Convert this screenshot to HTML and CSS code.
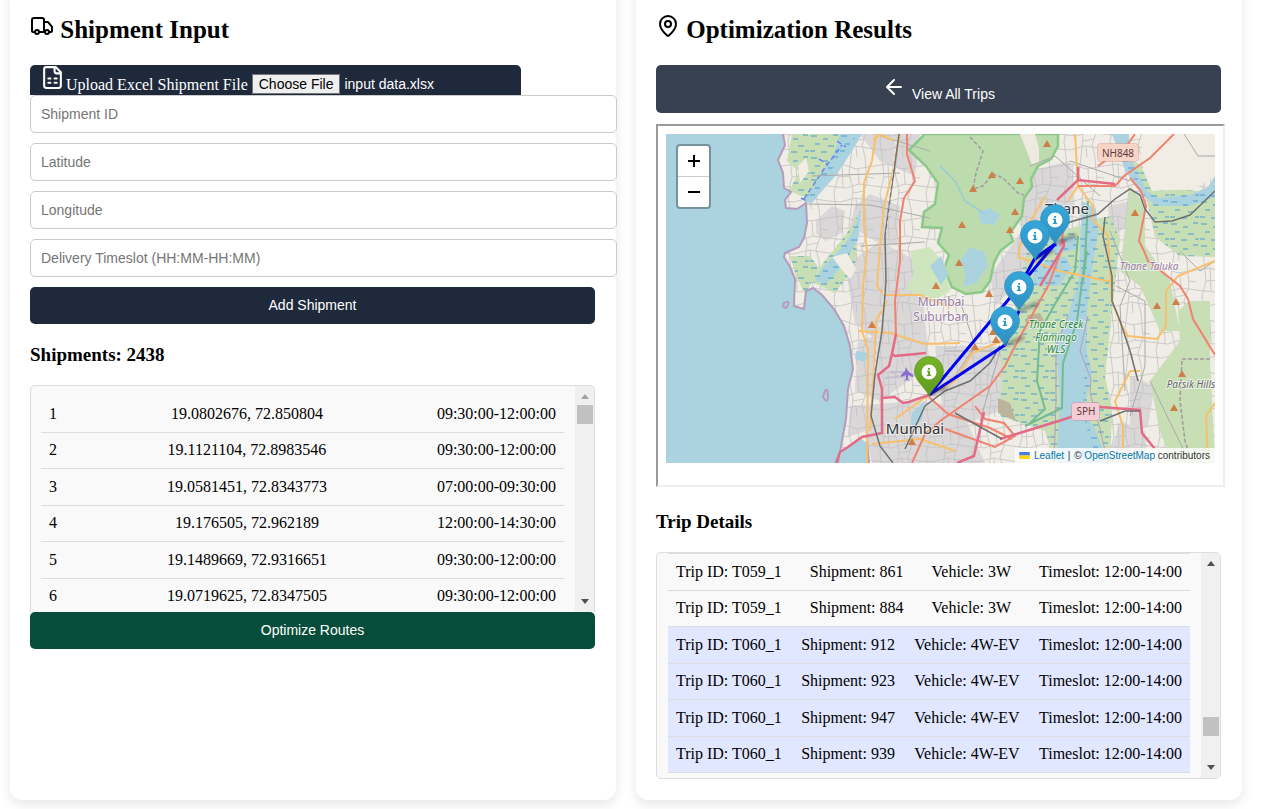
FILE: index.html
```html
<!DOCTYPE html>
<html lang="en">
<head>
<meta charset="utf-8">
<title>Shipment Optimizer</title>
<link rel="stylesheet" href="styles.css">
</head>
<body>
<main class="layout">
  <section class="card">
    <h2><svg class="icon" viewBox="0 0 24 24"><path d="M14 18V6a2 2 0 0 0-2-2H4a2 2 0 0 0-2 2v11a1 1 0 0 0 1 1h2M15 18H9M19 18h2a1 1 0 0 0 1-1v-3.65a1 1 0 0 0-.22-.624l-3.48-4.35A1 1 0 0 0 17.52 8H14"/><circle cx="17" cy="18" r="2"/><circle cx="7" cy="18" r="2"/></svg> Shipment Input</h2>
    <label class="upload" for="file"><svg class="icon" viewBox="0 0 24 24"><path d="M15 2H6a2 2 0 0 0-2 2v16a2 2 0 0 0 2 2h12a2 2 0 0 0 2-2V7ZM14 2v4a2 2 0 0 0 2 2h4M8 13h2M14 13h2M8 17h2M14 17h2"/></svg><span>Upload Excel Shipment File</span><input type="file" id="file"></label>
    <form class="fields">
      <input type="text" aria-label="Shipment ID" placeholder="Shipment ID">
      <input type="text" aria-label="Latitude" placeholder="Latitude">
      <input type="text" aria-label="Longitude" placeholder="Longitude">
      <input type="text" aria-label="Delivery Timeslot" placeholder="Delivery Timeslot (HH:MM-HH:MM)">
      <button type="button" class="btn navy">Add Shipment</button>
    </form>
    <h3>Shipments: 2438</h3>
    <div class="list shipments">
      <ul class="rows">
        <li><span>1</span><span>19.0802676, 72.850804</span><span>09:30:00-12:00:00</span></li>
        <li><span>2</span><span>19.1121104, 72.8983546</span><span>09:30:00-12:00:00</span></li>
        <li><span>3</span><span>19.0581451, 72.8343773</span><span>07:00:00-09:30:00</span></li>
        <li><span>4</span><span>19.176505, 72.962189</span><span>12:00:00-14:30:00</span></li>
        <li><span>5</span><span>19.1489669, 72.9316651</span><span>09:30:00-12:00:00</span></li>
        <li><span>6</span><span>19.0719625, 72.8347505</span><span>09:30:00-12:00:00</span></li>
      </ul>
      <div class="scrollbar at-top"><i class="up"></i><i class="thumb"></i><i class="down"></i></div>
    </div>
    <button type="button" class="btn green">Optimize Routes</button>
  </section>

  <section class="card">
    <h2><svg class="icon" viewBox="0 0 24 24"><path d="M20 10c0 4.993-5.539 10.193-7.399 11.799a1 1 0 0 1-1.202 0C9.539 20.193 4 14.993 4 10a8 8 0 0 1 16 0"/><circle cx="12" cy="10" r="3"/></svg> Optimization Results</h2>
    <button type="button" class="btn slate"><svg class="icon" viewBox="0 0 24 24"><path d="m12 19-7-7 7-7M19 12H5"/></svg> View All Trips</button>
    <div class="frame">
      <div class="map">
        <svg class="tiles" viewBox="666 133 549 329" preserveAspectRatio="xMidYMid slice" role="img" aria-label="Map of Mumbai and Thane">
          <defs>
            <pattern id="streets" width="46" height="52" patternUnits="userSpaceOnUse">
              <path d="M0 9 14 7 28 12 46 9M0 29 18 31 31 27 46 29M0 44 12 45 27 41 46 44M8 0 10 20 6 36 8 52M23 0 21 16 25 33 23 52M37 0 39 25 34 40 37 52M10 20 22 19M25 36 36 34M39 20 46 21M14 7 15 30M30 12 31 27M28 41 29 52" fill="none" stroke="#c3c1c1" stroke-width=".8"/>
            </pattern>
            <pattern id="marsh" width="30" height="22" patternUnits="userSpaceOnUse">
              <path d="M1 3h6M13 6h5M23 2h5M5 11h5M18 13h6M0 18h5M11 19h6M25 18h4" fill="none" stroke="#4a9bd0" stroke-width="1"/>
            </pattern>
            <filter id="soft" x="-20%" y="-20%" width="140%" height="140%"><feGaussianBlur stdDeviation="1.6"/></filter>
            <linearGradient id="blue" x2="0" y2="1"><stop offset="0" stop-color="#36a7da"/><stop offset="1" stop-color="#2f8fc0"/></linearGradient>
            <linearGradient id="lime" x2="0" y2="1"><stop offset="0" stop-color="#76b42a"/><stop offset="1" stop-color="#5f9a1d"/></linearGradient>
            <path id="drop" d="M0 24C-3 16-14.500 9-14.500-1A14.500 14.500 0 0 1 14.500-1C14.500 9 3 16 0 24Z"/>
            <g id="info" stroke="none"><circle r="7.500" fill="#fff"/><path d="M-1-4h2v1.700h-2zM-2-1.300H1V2.700H2.200V4H-2.200V2.700H-1V0H-2z" fill="currentColor"/></g>
            <path id="peak" d="M0-4 4 3H-4Z" fill="#cf7f46"/>
            <clipPath id="land"><path d="M783 133 785 144 778 159 783 172 784 187 791 191 785 199 786 207 797 208 806 202 807 222 804 237 799 246 785 252 784 256 790 266 795 278 794 305 804 308 806 290 813 287 822 294 834 308 844 325 850 345 853 368 848 388 846 418 841 445 838 462 842 450 860 437 867 442 869 462H1215V133Z"/></clipPath>
          </defs>
          <path d="M666 133h549v329H666z" fill="#aad3df"/>
          <g clip-path="url(#land)">
            <path d="M770 133h445v329H770z" fill="#f0ece6"/>
            <g fill="#d9d7d7">
              <path d="M855 205 870 193 900 205 897 245 875 240 850 225ZM816 220 832 205 845 210 842 232 825 240 816 232ZM845 265 880 240 920 262 925 320 890 350 855 322ZM858 340 925 320 930 365 880 400 855 390ZM850 405 920 400 960 405 985 462H872L865 430 848 436ZM935 345 1005 345 1000 410 945 430ZM1030 170 1070 160 1075 205 1050 230 1020 225ZM990 275 1025 225 1050 235 1015 285 995 305ZM1108 205 1130 200 1140 220 1110 235ZM1130 375 1155 385 1148 425 1130 430ZM1120 420 1145 430 1148 462H1108ZM860 133 920 133 915 175 880 160Z"/>
            </g>
            <path d="M770 133h445v329H770z" fill="url(#streets)"/>
            <path d="M925 133H1058L1058 145 1051 158 1038 165 1031 178 1032 186 1024 197 1022 215 1010 232 1013 240 1000 250 994 262 990 280 982 291 966 293 952 286 944 268 949 254 938 242 942 227 922 226 924 211 935 203 938 182 926 165 909 149Z" fill="#bddcae" stroke="#8cc989" stroke-width="2.500"/>
            <path d="M1020 133h15l4 14 0 14-7 3-6-16Z" fill="#eeeadf"/>
            <path d="M910 250 930 246 945 264 950 290 930 302 907 288 914 271Z" fill="#cfe5bd"/>
            <g fill="#c8deb5">
              <path d="M792 133H858L845 150 828 174 812 199 789 190 799 171 787 160ZM790 255 810 255 819 267 845 235 860 210 855 266 835 292 812 281 805 293 796 275Z"/>
              <path d="M1030 240 1110 215 1120 238 1110 330 1105 375 1112 408 1110 462H1055L1045 430 1000 415 1002 345 1010 330Z"/>
              <path d="M1120 155 1140 163 1150 185 1215 192V256L1180 255 1155 236 1147 200Z"/>
              <path d="M1130 185 1145 205 1145 245 1170 280 1180 330 1160 330 1140 285 1120 270Z"/>
              <path d="M1180 340 1178 310 1190 300 1210 300 1210 360 1215 462H1172L1160 430 1150 380Z"/>
            </g>
            <g fill="#aad3df">
              <path d="M840 133H862L852 150 837 173 822 190 812 202 804 201 819 176 834 153ZM861 207 858 239 843 264 826 283 815 280 823 266 842 247 853 231Z"/>
              <path d="M960 260 970 246 984 251 988 265 976 282 963 286 966 273ZM978 211 990 207 1000 214 994 224 980 222ZM930 265 941 255 948 274 941 284ZM1112 133H1128L1133 162 1147 190 1158 197 1190 194 1208 186 1215 175V196L1190 205 1157 205 1142 194 1125 169Z"/>
              <path d="M1082 200 1096 208 1098 232 1092 268 1087 310 1087 352 1092 372 1083 410 1095 428 1109 462H1056L1060 400 1056 340 1068 315 1079 278Z"/>
              <path d="M1035 265 1065 255 1072 268 1058 285 1032 285ZM1050 240 1075 235 1078 248 1055 253Z"/>
              <path d="M856 350 869 352 865 361 855 358ZM912 412 925 400 922 418 910 431Z"/>
            </g>
            <path d="M792 133H858L845 150 828 174 812 199 789 190 799 171 787 160ZM790 255 810 255 819 267 845 235 860 210 855 266 835 292 812 281 805 293 796 275ZM1030 240 1110 215 1120 238 1110 330 1105 375 1112 408 1110 462H1095L1083 410 1087 310 1060 320 1056 340 1060 400 1056 462 1045 430 1000 415 1002 345ZM1120 155 1140 163 1150 185 1215 192V256L1180 255 1155 236 1147 200Z" fill="url(#marsh)"/>
            <path d="M832 256 847 252 856 268 850 278 843 270ZM1145 133H1215V175L1195 188 1152 190 1146 175 1140 155ZM798 165 806 157 809 170 800 182Z" fill="#f1ede5"/>
            <path d="M1028 314 1040 312 1046 323 1025 322ZM998 397 1010 402 1016 420 998 412Z" fill="#bab59a"/>
          </g>

          <g fill="none" stroke="#b69bbb" stroke-width="2">
            <path d="M783 133 785 144 778 159 783 172 784 187 791 191 785 199 786 207 797 208 806 202 807 222 804 237 799 246 785 252 784 256 790 266 795 278 794 305 804 308 806 290 813 287 822 294 834 308 844 325 850 345 853 368 848 388 846 418 841 445 838 462M867 440 869 462"/>
            <path d="M784 302q6-3 4 2t-5 1zM825 390q3-4 3 5t-5 1z"/>
            <path d="M1068 315 1056 345 1056 400 1054 462M1088 315 1080 350 1091 378 1090 392 1098 420 1108 462" stroke-width="1"/>
          </g>
          <path d="M804 198 824 168 842 144M837 140 846 146M819 158 827 163M801 197 807 200" fill="none" stroke="#6686e8" stroke-width="1.500" stroke-dasharray="5 3"/>
          <path d="M1088 200 1085 258 1077 320 1063 362 1062 407 1025 425M1078 235 1075 270 1055 303 1040 330 1037 380 1045 408 1030 422M1087 250 1083 280" fill="none" stroke="#72bc93" stroke-width="2"/>
          <g fill="none" stroke="#aaa" stroke-width="1">
            <path d="M806 203 870 204 930 217M812 175 900 172M860 245 925 241M880 135 930 150M1030 165 1055 155 1100 195M1070 160 1130 180M1110 230 1130 280 1120 305 1125 390M1180 250 1200 270 1215 260M1116 285 1145 300 1145 365 1130 415M1150 380 1190 462M945 350 1000 350 980 420M960 300 975 345 945 390M1184 133 1198 155 1215 155"/>
          </g>
          <path d="M970 136 983 150 976 172 973 188 983 185 993 173 1003 177 1018 192 1024 194M1210 358 1182 358 1180 400 1185 440 1190 455" fill="none" stroke="#a39a9d" stroke-width="1.500" stroke-dasharray="4 2"/>
          <path d="M940 165 955 180 965 200 985 213" fill="none" stroke="#9acbd8" stroke-width="1.500"/>

          <g fill="none" stroke="#f8c06c" stroke-width="2">
            <path d="M876 133 872 160 864 182 864 225 867 250 863 285 862 330 868 348 867 462"/>
            <path d="M873 139 880 134 893 139M900 133 893 170 884 205 880 245 877 285 884 294 920 294 950 306"/>
            <path d="M887 300 876 320 874 370 870 430M858 330 890 332 925 343 960 342M895 418 920 400 955 380 972 352 1002 340M872 443 920 438 955 450"/>
            <path d="M1075 133 1078 185 1068 200M1078 185 1093 205 1092 218 1108 235 1112 300 1122 325 1128 335 1157 338 1166 325 1166 290 1178 275 1215 260M1018 256 1060 270 1113 281M1018 256 1020 245 1025 230 1045 195M1130 370 1115 400 1123 425 1123 462M1130 370 1140 370M1208 462 1206 415 1215 402"/>
          </g>
          <g fill="none" stroke="#f08370" stroke-width="2">
            <path d="M907 133 907 153 915 180 904 197 900 220 900 260 895 300 896 333"/>
            <path d="M1060 245 1062 238 1064 225M1065 240 1048 285 1014 347 1005 365 990 385 940 420 925 433 912 462M929 396 948 413 990 427 1012 438M975 405 985 418 1004 422 1015 435 995 446 945 428M1078 185 1115 185 1124 175 1150 157 1174 133M1135 133 1128 143 1112 155 1098 165M1130 177 1141 190 1146 205 1139 240 1144 250 1148 260 1180 285 1188 298 1193 318 1215 354"/>
          </g>
          <g fill="none" stroke="#e46b87" stroke-width="2.500">
            <path d="M896 333 892 353 895 355 926 352M892 353 889 365 878 374 882 388 882 432 862 436 848 446 840 451 836 462M882 397 895 396 903 402 909 401 929 394M1057 199 1078 179 1115 183M1078 166V179M1062 238 1064 245 1040 285M1000 438 1062 419 1100 406 1140 409 1142 432 1155 448M984 411 974 455 957 462"/>
          </g>
          <g fill="none" stroke="#707070" stroke-width="1.500">
            <path d="M899 133 894 170 889 205 885 235 886 280 882 330 875 373 871 415 880 445 893 462M1215 190 1190 214 1172 220 1155 221 1145 208 1140 194 1130 188 1115 198 1098 213 1070 221 1050 233M1105 216 1103 235 1112 275 1112 300 1120 320 1130 350 1138 380M1000 345 990 362 970 380 945 390 925 405 905 448M955 412 1002 438M1100 420 1125 410 1140 410"/>
            <path d="M896 140 886 235M884 290 874 372" stroke="#fff" stroke-width=".6" stroke-dasharray="4 4"/>
          </g>
          <path d="M890 371 908 371M885 377 925 373" stroke="#c5bed2" stroke-width="2"/>
          <path d="M906 366 908 370 913 374V376L908 374V378L910 380 907 379 904 380 906 378V374L901 376V374L905 370Z" fill="#8a6bd0"/>

          <g>
            <use href="#peak" x="1047" y="143"/><use href="#peak" x="992" y="174"/><use href="#peak" x="1020" y="180"/><use href="#peak" x="973" y="188"/><use href="#peak" x="1015" y="211"/><use href="#peak" x="962" y="224"/><use href="#peak" x="1010" y="229"/><use href="#peak" x="959" y="262"/><use href="#peak" x="989" y="293"/><use href="#peak" x="936" y="285"/><use href="#peak" x="872" y="324"/><use href="#peak" x="1135" y="212"/><use href="#peak" x="1157" y="305"/><use href="#peak" x="1176" y="301"/><use href="#peak" x="1182" y="373"/><use href="#peak" x="1174" y="407"/><use href="#peak" x="912" y="441"/><use href="#peak" x="993" y="331"/><use href="#peak" x="975" y="346"/><use href="#peak" x="996" y="339"/>
          </g>

          <g class="map-text">
            <rect x="1098" y="143" width="40" height="17" rx="2" fill="#f7d3c8" stroke="#dc9684"/><text class="shield" x="1118" y="156">NH848</text>
            <rect x="1072" y="402" width="27" height="17" rx="2" fill="#f5cbd6" stroke="#d68ca2"/><text class="shield" x="1086" y="414">SPH</text>
            <text class="city" x="1067" y="213">Thane</text>
            <text class="city" x="915" y="433">Mumbai</text>
            <text class="district" x="941" y="305">Mumbai</text><text class="district" x="941" y="320">Suburban</text>
            <text class="taluka" x="1149" y="269">Thane Taluka</text>
            <text class="reserve" x="1056" y="327">Thane Creek</text><text class="reserve" x="1056" y="340">Flamingo</text><text class="reserve" x="1056" y="352">WLS</text>
            <text class="hills" x="1191" y="387">Parsik Hills</text>
          </g>

          <path d="M929 394 1019 286 1035 257 1055 243 1019 286M1019 310 1005 344 929 394M1035 258 1056 243" fill="none" stroke="#0000f0" stroke-width="3" stroke-linejoin="round"/>
          <g stroke="#333" stroke-width="5" stroke-linecap="round" opacity=".35" filter="url(#soft)"><path d="M1057 241 1074 235M1037 257 1052 250M1021 309 1036 303M1007 343 1022 337M931 393 944 387"/></g>
          <g color="#2f9bcd" fill="url(#blue)" stroke="#2c8fbd" stroke-width=".6">
            <g transform="translate(1055 219)"><use href="#drop"/><use href="#info"/></g>
            <g transform="translate(1035 235)"><use href="#drop"/><use href="#info"/></g>
            <g transform="translate(1019 286)"><use href="#drop"/><use href="#info"/></g>
            <g transform="translate(1005 321)"><use href="#drop"/><use href="#info"/></g>
          </g>
          <g color="#69a522" fill="url(#lime)" stroke="#5c911c" stroke-width=".6" transform="translate(929 371)"><use href="#drop"/><use href="#info"/></g>
        </svg>
        <div class="zoom"><button type="button" aria-label="Zoom in"><svg viewBox="0 0 14 14"><path d="M1 7h12M7 1v12"/></svg></button><button type="button" aria-label="Zoom out"><svg viewBox="0 0 14 14"><path d="M1 7h12"/></svg></button></div>
        <div class="credit"><a href="#leaflet"><svg class="flag" viewBox="0 0 12 8"><path fill="#4c7be1" d="M0 0h12v4H0z"/><path fill="#ffd500" d="M0 4h12v4H0z"/></svg> Leaflet</a> <span>|</span> © <a href="#osm">OpenStreetMap</a> contributors</div>
      </div>
    </div>
    <h3 class="details-title">Trip Details</h3>
    <div class="list trips">
      <ul class="rows">
        <li><span>Trip ID: T059_1</span><span>Shipment: 861</span><span>Vehicle: 3W</span><span>Timeslot: 12:00-14:00</span></li>
        <li><span>Trip ID: T059_1</span><span>Shipment: 884</span><span>Vehicle: 3W</span><span>Timeslot: 12:00-14:00</span></li>
        <li class="active"><span>Trip ID: T060_1</span><span>Shipment: 912</span><span>Vehicle: 4W-EV</span><span>Timeslot: 12:00-14:00</span></li>
        <li class="active"><span>Trip ID: T060_1</span><span>Shipment: 923</span><span>Vehicle: 4W-EV</span><span>Timeslot: 12:00-14:00</span></li>
        <li class="active"><span>Trip ID: T060_1</span><span>Shipment: 947</span><span>Vehicle: 4W-EV</span><span>Timeslot: 12:00-14:00</span></li>
        <li class="active"><span>Trip ID: T060_1</span><span>Shipment: 939</span><span>Vehicle: 4W-EV</span><span>Timeslot: 12:00-14:00</span></li>
      </ul>
      <div class="scrollbar near-end"><i class="up"></i><i class="thumb"></i><i class="down"></i></div>
    </div>
  </section>
</main>
<script src="app.js"></script>
</body>
</html>
```
FILE: styles.css
```css
body {
  margin: 0;
  background: #fff;
  color: #000;
  font: 16px/20px "Liberation Serif", "Times New Roman", serif;
}
.layout {
  display: grid;
  grid-template-columns: 1fr 1fr;
  gap: 20px;
  padding: 0 38px 9px 10px;
  overflow: hidden;
}
.card {
  min-width: 0;
  margin-top: -20px;
  padding: 34px 21px 21px 20px;
  border-radius: 12px;
  background: #fff;
  box-shadow: 0 4px 12px rgba(0, 0, 0, .1);
}
.icon {
  width: 24px;
  height: 24px;
  fill: none;
  stroke: currentColor;
  stroke-width: 2;
  stroke-linecap: round;
  stroke-linejoin: round;
}
h2 {
  margin: 0 0 20px;
  font-size: 25px;
  line-height: 30px;
}
h3 {
  margin: 20px 0;
  font-size: 19px;
  line-height: 21px;
}
.upload {
  display: flex;
  align-items: flex-start;
  width: fit-content;
  height: 30px;
  padding: 0 12px 0 10px;
  border-radius: 5px 5px 0 0;
  background: #1e293b;
  color: #fff;
  overflow: hidden;
}
.upload .icon { width: 25px; height: 25px; stroke-width: 2; }
.upload span { padding: 10px 4px 0 1px; white-space: nowrap; }
.upload input {
  width: 257px;
  margin-top: 9px;
  font: 14px "Liberation Sans", Arial, sans-serif;
}
.upload input::file-selector-button {
  padding: 1px 6px;
  border: 1px solid #767676;
  background: #efefef;
  color: #000;
  font: inherit;
}
.fields { display: flex; flex-direction: column; gap: 10px; margin: 0; }
.fields input {
  width: 100%;
  height: 36px;
  padding: 0 10px;
  border: 1px solid #ccc;
  border-radius: 5px;
  background: #fff;
  font: 14px "Liberation Sans", Arial, sans-serif;
}
.fields input::placeholder { color: #757575; }
.btn {
  display: block;
  width: 100%;
  padding: 10px;
  border: 0;
  border-radius: 5px;
  color: #fff;
  font: 14px/17px "Liberation Sans", Arial, sans-serif;
}
.navy { background: #1e293b; }
.green { background: #064e3b; }
.slate { padding: 10px 10px 3px; background: #374151; line-height: 31px; }
.slate .icon { margin-right: 2px; }
.list {
  display: flex;
  height: 225px;
  border: 1px solid #ddd;
  border-radius: 5px;
  background: #f9f9f9;
  overflow: hidden;
}
.rows {
  flex: 1;
  display: grid;
  grid-template-rows: repeat(6, 1fr);
  height: 219px;
  margin: 0 11px 0 10px;
  padding: 0;
  list-style: none;
}
.rows li {
  display: flex;
  align-items: center;
  justify-content: space-between;
  padding: 0 8px;
  border-bottom: 1px solid #ddd;
}
.shipments { height: 226px; border-bottom: 0; border-radius: 5px 5px 0 0; }
.shipments .rows { padding-top: 10px; }
.trips .rows { border-top: 1px solid #ddd; margin-left: 11px; }
.active { background: #e0e7ff; }
.scrollbar {
  display: flex;
  flex-direction: column;
  align-items: center;
  width: 19px;
  padding: 8px 0;
  box-sizing: border-box;
  background: #f0f0f0;
}
.scrollbar i { display: block; }
.up, .down { border: 4px solid transparent; }
.up { border-top: 0; border-bottom: 5px solid #505050; }
.down { margin-top: auto; border-bottom: 0; border-top: 5px solid #505050; }
.at-top .up { border-bottom-color: #a3a3a3; }
.thumb { width: 16px; height: 19px; margin-top: 6px; background: #c1c1c1; }
.near-end .thumb { margin-top: 151px; }
.frame {
  width: 100%;
  margin-top: 11px;
  border: 2px solid;
  border-color: #9a9a9a #eee #eee #9a9a9a;
}
.map { position: relative; margin: 8px 8px 22px; }
.tiles { display: block; width: 100%; aspect-ratio: 549 / 329; }
.map-text { font-family: "Noto Sans", sans-serif; text-anchor: middle; paint-order: stroke; stroke: rgba(255, 255, 255, .6); stroke-width: 2px; }
.map-text rect { stroke-width: 1px; }
.shield { font-size: 10px; fill: #623c3c; stroke: none; }
.city { font-size: 15px; fill: #333; }
.district { font-size: 12px; fill: #9a7ba3; }
.taluka { font-size: 10px; font-style: italic; fill: #9a7ba3; }
.reserve { font-size: 10px; font-style: italic; fill: #2d8739; }
.hills { font-size: 10px; font-style: italic; fill: #666; }
.zoom {
  position: absolute;
  top: 10px;
  left: 10px;
  display: flex;
  flex-direction: column;
  border: 2px solid rgba(0, 0, 0, .3);
  border-radius: 4px;
  background: #fff;
  background-clip: padding-box;
}
.zoom button {
  display: grid;
  place-items: center;
  width: 31px;
  height: 30px;
  padding: 0;
  border: 0;
  background: none;
}
.zoom button + button { height: 31px; border-top: 1px solid #ccc; }
.zoom svg { width: 14px; height: 14px; fill: none; stroke: #000; stroke-width: 2; }
.credit {
  position: absolute;
  right: 0;
  bottom: 0;
  padding: 0 5px 0 4px;
  background: rgba(255, 255, 255, .8);
  color: #333;
  font: 10px/15px "Liberation Sans", Arial, sans-serif;
  white-space: nowrap;
}
.credit a { color: #0078a8; text-decoration: none; }
.credit span { padding: 0 1px; }
.flag { width: 11px; height: 7px; margin-right: 1px; }
.details-title { margin: 24px 0 20px; }
```
FILE: app.js
```js
const files = new DataTransfer();
files.items.add(new File([""], "input data.xlsx"));
document.getElementById("file").files = files.files;
```
